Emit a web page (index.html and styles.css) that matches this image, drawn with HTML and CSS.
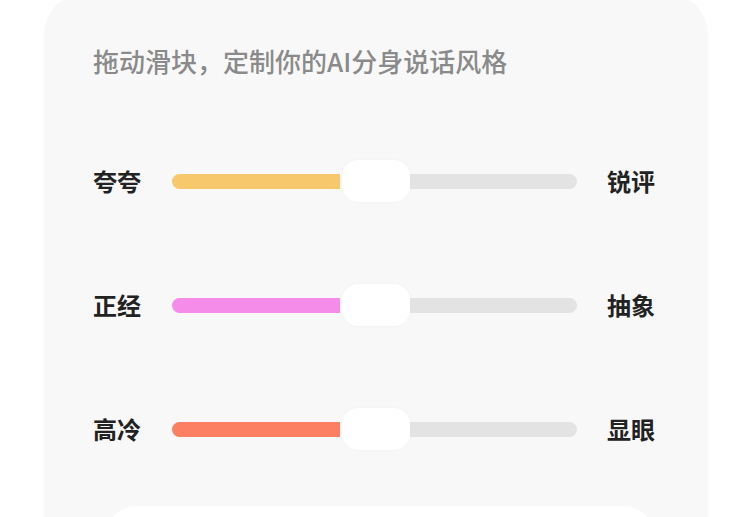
FILE: index.html
```html
<!DOCTYPE html>
<html lang="zh-CN">
<head>
<meta charset="utf-8">
<title>AI分身说话风格</title>
<link rel="stylesheet" href="styles.css">
</head>
<body>
  <div class="card">
    <div class="title">拖动滑块，定制你的AI分身说话风格</div>
    <div class="row">
      <span class="label">夸夸</span>
      <div class="slider">
        <div class="fill fill-yellow"></div>
        <div class="thumb"></div>
        <div class="rest"></div>
      </div>
      <span class="label">锐评</span>
    </div>
    <div class="row">
      <span class="label">正经</span>
      <div class="slider">
        <div class="fill fill-pink"></div>
        <div class="thumb"></div>
        <div class="rest"></div>
      </div>
      <span class="label">抽象</span>
    </div>
    <div class="row">
      <span class="label">高冷</span>
      <div class="slider">
        <div class="fill fill-coral"></div>
        <div class="thumb"></div>
        <div class="rest"></div>
      </div>
      <span class="label">显眼</span>
    </div>
    <div class="panel"></div>
  </div>
</body>
</html>
```

FILE: styles.css
```css
html, body {
  margin: 0;
  padding: 0;
  background: #ffffff;
}

body {
  font-family: "Noto Sans CJK SC", "Noto Sans", sans-serif;
  height: 517px;
  overflow: hidden;
}

.card {
  margin-left: 44px;
  width: 664px;
  margin-top: -6px;
  padding-top: 50px;
  background: #f8f8f8;
  border-radius: 40px 40px 0 0;
  display: flex;
  flex-direction: column;
  gap: 82px;
  height: 523px;
  overflow: hidden;
  box-sizing: border-box;
}

.title {
  padding-left: 49px;
  font-size: 26px;
  line-height: 34px;
  font-weight: 500;
  color: #8a8a8a;
}

.row {
  display: flex;
  align-items: center;
  height: 42px;
  padding-left: 49px;
  gap: 30px;
  flex-shrink: 0;
}

.label {
  font-size: 24px;
  line-height: 32px;
  font-weight: 700;
  color: #222222;
  width: 49px;
}

.slider {
  width: 405px;
  height: 42px;
  display: flex;
  align-items: center;
}

.fill {
  width: 168px;
  height: 15px;
  border-radius: 8px 0 0 8px;
}

.fill-yellow { background: #f8c86c; }
.fill-pink { background: #f68cea; }
.fill-coral { background: #fc7f63; }

.thumb {
  width: 68px;
  height: 42px;
  border-radius: 16px;
  background: #ffffff;
  box-shadow: 0 0 4px rgba(0, 0, 0, 0.03);
  margin-left: 2px;
}

.rest {
  flex: 1;
  height: 15px;
  background: #e3e3e3;
  border-radius: 0 8px 8px 0;
}

.panel {
  margin-left: 62px;
  width: 548px;
  height: 120px;
  flex-shrink: 0;
  margin-top: -26px;
  background: #ffffff;
  border-radius: 30px;
}
```
